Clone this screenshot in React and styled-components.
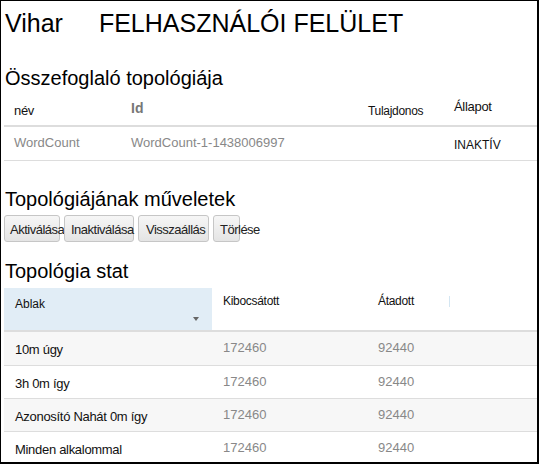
import React from "react";
import styled, { createGlobalStyle } from "styled-components";

const GlobalStyle = createGlobalStyle`
  body {
    margin: 0;
    background: #fff;
    font-family: "Liberation Sans", Arial, sans-serif;
    color: #000;
  }
`;

const summary = {
  cols: ["név", "Id", "Tulajdonos", "Állapot"],
  row: { name: "WordCount", id: "WordCount-1-1438006997", owner: "", status: "INAKTÍV" },
};

const actions = [
  { label: "Aktiválása", w: 56, pad: 5 },
  { label: "Inaktiválása", w: 70, pad: 6 },
  { label: "Visszaállás", w: 71, pad: 7 },
  { label: "Törlése", w: 27, pad: 6 },
];

const stats = [
  { win: "10m úgy", emitted: 172460, transferred: 92440 },
  { win: "3h 0m így", emitted: 172460, transferred: 92440 },
  { win: "Azonosító Nahát 0m így", emitted: 172460, transferred: 92440 },
  { win: "Minden alkalommal", emitted: 172460, transferred: 92440 },
];

export default function App() {
  return (
    <>
      <GlobalStyle />
      <Frame>
        <TitleBar>
          <span>Vihar</span>
          <PageName>FELHASZNÁLÓI FELÜLET</PageName>
        </TitleBar>

        <Heading $top={28}>Összefoglaló topológiája</Heading>
        <SummaryRow $head>
          <HeadLabel $top={13}>név</HeadLabel>
          <IdLabel $top={10}>Id</IdLabel>
          <HeadLabel $top={14} $size={12}>Tulajdonos</HeadLabel>
          <HeadLabel $top={9}>Állapot</HeadLabel>
        </SummaryRow>
        <SummaryRow>
          <Muted $top={8}>{summary.row.name}</Muted>
          <Muted $top={8}>{summary.row.id}</Muted>
          <Muted $top={8}>{summary.row.owner}</Muted>
          <Status $top={11}>{summary.row.status}</Status>
        </SummaryRow>

        <Heading $top={26}>Topológiájának műveletek</Heading>
        <ActionBar>
          {actions.map((a) => (
            <ActionButton key={a.label} $w={a.w} $pad={a.pad}>
              {a.label}
            </ActionButton>
          ))}
        </ActionBar>

        <Heading $top={17}>Topológia stat</Heading>
        <StatsHead>
          <SortCell>
            <span>Ablak</span>
            <SortArrow />
          </SortCell>
          <ColLabel>Kibocsátott</ColLabel>
          <ColLabel>Átadott</ColLabel>
          <ColDivider />
        </StatsHead>
        {stats.map((s, i) => (
          <StatsRow key={s.win} $striped={i % 2 === 0} $first={i === 0}>
            <WindowLabel>{s.win}</WindowLabel>
            <Number>{s.emitted}</Number>
            <Number>{s.transferred}</Number>
          </StatsRow>
        ))}
      </Frame>
    </>
  );
}

const Frame = styled.div`
  box-sizing: border-box;
  width: 539px;
  height: 464px;
  border: 1px solid #000;
  border-right-width: 2px;
  border-bottom-width: 2px;
  padding-left: 3px;
  overflow: hidden;
`;

const TitleBar = styled.h1`
  display: flex;
  margin: 7px 0 0 1px;
  height: 30px;
  font-size: 25px;
  line-height: 30px;
  font-weight: normal;
`;

const PageName = styled.span`
  margin-left: 36px;
`;

const Heading = styled.h2`
  margin: ${(p) => p.$top}px 0 0 1px;
  font-size: 20px;
  line-height: 24px;
  font-weight: normal;
`;

// summary table
const SummaryRow = styled.div`
  display: grid;
  grid-template-columns: 117px 237px 86px 1fr;
  align-items: start;
  height: ${(p) => (p.$head ? 35 : 33)}px;
  border-bottom: ${(p) => (p.$head ? 2 : 1)}px solid #ddd;
`;

const Cell = styled.div`
  padding: ${(p) => p.$top}px 0 0 10px;
  white-space: nowrap;
`;

const HeadLabel = styled(Cell)`
  font-size: ${(p) => p.$size || 13}px;
  line-height: 15px;
  letter-spacing: -0.3px;
  color: #111;
`;

const IdLabel = styled(Cell)`
  font-size: 14px;
  line-height: 16px;
  font-weight: bold;
  color: #777;
`;

const Muted = styled(Cell)`
  font-size: 13px;
  line-height: 15px;
  color: #888;
`;

const Status = styled(Cell)`
  font-size: 12px;
  line-height: 14px;
  color: #111;
`;

// actions
const ActionBar = styled.div`
  display: flex;
  gap: 4px;
  margin-top: 4px;
`;

const ActionButton = styled.button`
  box-sizing: border-box;
  width: ${(p) => p.$w}px;
  height: 27px;
  padding: 2px 0 0 ${(p) => p.$pad}px;
  text-align: left;
  white-space: nowrap;
  overflow: visible;
  font-family: inherit;
  font-size: 13px;
  letter-spacing: -0.5px;
  line-height: 23px;
  color: #222;
  background: linear-gradient(#f6f6f6, #e4e4e4);
  border: 1px solid #c6c6c6;
  border-radius: 3px;
`;

// stats table
const statCols = "208px 155px 82px 1fr";

const StatsHead = styled.div`
  display: grid;
  grid-template-columns: ${statCols};
  align-items: start;
  height: 42px;
  margin-top: 5px;
  border-bottom: 2px solid #ddd;
  font-size: 12px;
  line-height: 14px;
  color: #111;
`;

const SortCell = styled.div`
  display: flex;
  flex-direction: column;
  align-self: stretch;
  padding: 9px 13px 0 11px;
  background: #e1edf6;
`;

const SortArrow = styled.span`
  align-self: flex-end;
  margin-top: 6px;
  width: 0;
  height: 0;
  border-left: 3.5px solid transparent;
  border-right: 3.5px solid transparent;
  border-top: 4px solid #666;
`;

const ColLabel = styled.div`
  padding: 6px 0 0 11px;
  letter-spacing: -0.3px;
`;

const ColDivider = styled.div`
  margin-top: 8px;
  height: 11px;
  border-left: 1px solid #d4e6f2;
`;

const StatsRow = styled.div`
  box-sizing: border-box;
  display: grid;
  grid-template-columns: ${statCols};
  align-items: start;
  height: 33px;
  border-top: ${(p) => (p.$first ? "none" : "1px solid #ddd")};
  background: ${(p) => (p.$striped ? "#f7f7f7" : "#fff")};
`;

const WindowLabel = styled.div`
  padding: 10px 0 0 11px;
  font-size: 13px;
  line-height: 15px;
  letter-spacing: -0.3px;
  color: #111;
  white-space: nowrap;
`;

const Number = styled.div`
  padding: 8px 0 0 11px;
  font-size: 13px;
  line-height: 15px;
  color: #888;
`;
